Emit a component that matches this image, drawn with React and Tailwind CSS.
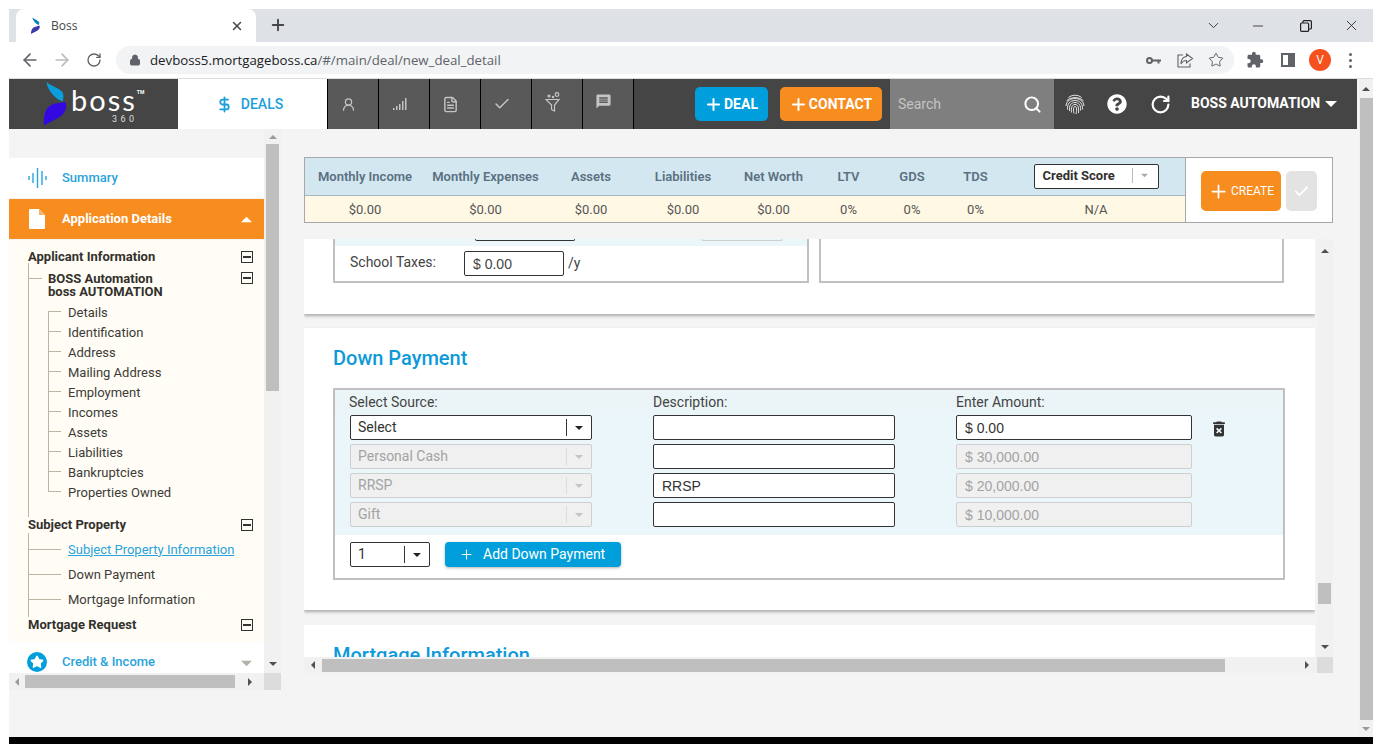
import { ArrowLeft, ArrowRight, RotateCw, Lock, Star, Check, Plus, Search, X, ChevronDown, Minus, UserRound, FileText, DollarSign } from 'lucide-react';
import { FaQuestionCircle } from 'react-icons/fa';
import { MdMessage, MdDeleteForever, MdExtension } from 'react-icons/md';

const roboto = { fontFamily: 'Roboto, sans-serif' };
const arial = { fontFamily: '"Liberation Sans", Arial, sans-serif' };

function Tri({ dir = 'down', className = '', size = 8 }) {
  const pts = {
    up: '0,6 4,2 8,6',
    down: '0,2 8,2 4,6',
    left: '6,0 6,8 2,4',
    right: '2,0 2,8 6,4',
  };
  return (
    <svg width={size} height={size} viewBox="0 0 8 8" className={className}>
      <polygon points={pts[dir]} fill="currentColor" />
    </svg>
  );
}

function Logo() {
  return (
    <svg width="26" height="46" viewBox="0 0 26 46" className="shrink-0">
      <path d="M3.5 0.5 C5 4 15 6 19.5 11 C21 14 20.5 18 19.5 20.5 C14 19 4 10 3.5 0.5 Z" fill="#0a9fdc" />
      <path d="M22 21 C24 24 23.5 29 20 33 C15 38 6 41 1 44.5 C0.5 37 1 30 6 25.5 C10 22 17 22 22 21 Z" fill="#3408e0" />
    </svg>
  );
}

function FingerprintRound() {
  return (
    <svg width="20" height="21" viewBox="0 0 20 21" fill="none" stroke="#e8e8e8" strokeWidth="1" className="shrink-0">
      <path d="M3.500 3.500C7 .5 13 .5 16.500 3.500" />
      <path d="M1.500 7C5 2.500 15 2.500 18.500 7" />
      <path d="M1 12C1.500 6.500 6 4.500 10 4.500s8.500 2 9 7.500" />
      <path d="M2.500 15.500C2 10 5 6.500 10 6.500s8 3.500 7.500 9" />
      <path d="M4.500 17C4 11.500 6 8.500 10 8.500s6 3 5.500 8" />
      <path d="M6.500 18.500C6 13.500 7 10.500 10 10.500s4 3 3.500 8.500" />
      <path d="M9 19.500c-.5-3-1-7 1-7s2 4 1 7.500" />
    </svg>
  );
}

function TabIcon({ children }) {
  return (
    <div className="flex h-full w-[51px] items-center justify-center border-r border-black bg-[#595959] pr-[9px] text-[#c4c4c4]">
      {children}
    </div>
  );
}

function HScroll({ className = '', thumb, left, right, arrow = 'text-[#505050]' }) {
  return (
    <div className={`flex h-full items-center bg-[#f1f1f1] text-[#505050] ${className}`}>
      <div className={`flex items-center justify-center ${left} ${arrow}`}><Tri dir="left" /></div>
      <div className={`h-[13px] bg-[#bfbfbf] ${thumb}`} />
      <div className="flex-1" />
      <div className={`flex items-center justify-center ${right}`}><Tri dir="right" /></div>
    </div>
  );
}

function MinusBox() {
  return (
    <div className="mr-[11px] flex h-[12px] w-[12px] shrink-0 items-center justify-center border border-[#333]">
      <div className="h-[2px] w-[8px] bg-[#333]" />
    </div>
  );
}

function SectionRow({ label, className = '' }) {
  return (
    <div className={`ml-[19px] flex items-center justify-between text-[13px] font-bold text-[#33312d] ${className}`}>
      <span className="whitespace-nowrap">{label}</span>
      <MinusBox />
    </div>
  );
}

function TreeLeaf({ label, first, last }) {
  return (
    <div className="flex h-[20px] text-[13px] text-[#3d3b38]">
      <div className="flex h-full w-[13px] shrink-0 flex-col">
        <div className={`h-[10px] border-b border-[#bbb5a5] ${first ? 'ml-0 border-l-0' : 'border-l'}`} />
        <div className={`h-[10px] ${last ? '' : 'border-l border-[#bbb5a5]'}`} />
      </div>
      <span className="ml-[7px] whitespace-nowrap leading-[22px]">{label}</span>
    </div>
  );
}

function PropertyLeaf({ label, link }) {
  return (
    <div className="flex h-[25px] items-center text-[13px] text-[#3d3b38]">
      <div className="h-px w-[32px] shrink-0 bg-[#bbb5a5]" />
      <span className={`ml-[7px] whitespace-nowrap ${link ? 'text-[#29a3dc] underline' : ''}`}>{label}</span>
    </div>
  );
}

function Sidebar() {
  const leaves = ['Details', 'Identification', 'Address', 'Mailing Address', 'Employment', 'Incomes', 'Assets', 'Liabilities', 'Bankruptcies', 'Properties Owned'];
  return (
    <div className="flex w-[272px] shrink-0 flex-col">
      <div className="flex h-[544px]">
        <div className="h-full w-[255px] overflow-hidden pt-[29px]">
          <div className="flex h-[40px] items-center bg-white pl-[19px] text-[13px] font-medium text-[#29a3dc]">
            <svg width="20" height="20" viewBox="0 0 20 20" className="shrink-0" stroke="#29a3dc" strokeWidth="1.4">
              <path d="M1 8v4M5 5v10M9.500 0v20M14 3v14M18 8v4" />
            </svg>
            <span className="ml-[14px]">Summary</span>
          </div>
          <div className="mt-px flex h-[40px] items-center justify-between bg-[#f78c1f] pl-[20px] pr-[12px] text-[13px] font-bold text-white">
            <div className="flex items-center">
              <svg width="16" height="20" viewBox="0 0 16 20" className="shrink-0">
                <path d="M1 0h9l6 6v13a1 1 0 0 1-1 1H1a1 1 0 0 1-1-1V1a1 1 0 0 1 1-1z" fill="#fff" />
                <path d="M10 0v6h6z" fill="#f9b26a" />
              </svg>
              <span className="ml-[17px]">Application Details</span>
            </div>
            <Tri dir="up" size={11} />
          </div>
          <div className="mt-px h-[402px] bg-[#fffdf5] pt-[10px]">
            <SectionRow label="Applicant Information" className="h-[13px]" />
            <div className="ml-[19px] border-l border-[#bbb5a5] pb-[15px] pt-[9px]">
              <div className="flex">
                <div className="mt-[6px] h-px w-[13px] shrink-0 bg-[#bbb5a5]" />
                <div className="ml-[6px] text-[13px] font-bold leading-[13px] text-[#33312d]">
                  BOSS Automation<br />boss AUTOMATION
                </div>
                <div className="flex-1" />
                <MinusBox />
              </div>
              <div className="ml-[19px] mt-[4px]">
                {leaves.map((l, i) => (
                  <TreeLeaf key={l} label={l} first={i === 0} last={i === leaves.length - 1} />
                ))}
              </div>
            </div>
            <SectionRow label="Subject Property" className="h-[16px]" />
            <div className="ml-[19px] border-l border-[#bbb5a5] pb-[5px] pt-[4px]">
              <PropertyLeaf label="Subject Property Information" link />
              <PropertyLeaf label="Down Payment" />
              <PropertyLeaf label="Mortgage Information" />
            </div>
            <SectionRow label="Mortgage Request" className="h-[16px]" />
          </div>
          <div className="flex h-[31px] items-center justify-between bg-white pl-[18px] pr-[12px] pt-[8px] text-[13px] font-medium text-[#29a3dc]">
            <div className="flex items-center">
              <div className="flex h-[20px] w-[20px] items-center justify-center rounded-full bg-[#009fdb]">
                <Star size={14} fill="#fff" stroke="#fff" />
              </div>
              <span className="ml-[15px]">Credit &amp; Income</span>
            </div>
            <Tri dir="down" size={11} className="mt-[3px] text-[#b3b0a8]" />
          </div>
        </div>
        <div className="flex h-full w-[17px] flex-col items-center bg-[#f1f1f1] text-[#9a9a9a]">
          <div className="flex h-[15px] items-center"><Tri dir="up" /></div>
          <div className="h-[247px] w-[13px] bg-[#bfbfbf]" />
          <div className="flex-1" />
          <div className="flex h-[18px] items-center text-[#505050]"><Tri dir="down" /></div>
        </div>
      </div>
      <div className="flex h-[17px]">
        <HScroll className="w-[255px]" thumb="w-[210px]" left="w-[16px]" right="w-[29px]" arrow="text-[#9a9a9a]" />
        <div className="w-[17px] bg-[#dcdcdc]" />
      </div>
    </div>
  );
}

function SummaryBar() {
  const cols = [
    ['Monthly Income', '$0.00'],
    ['Monthly Expenses', '$0.00'],
    ['Assets', '$0.00'],
    ['Liabilities', '$0.00'],
    ['Net Worth', '$0.00'],
    ['LTV', '0%'],
    ['GDS', '0%'],
    ['TDS', '0%'],
  ];
  return (
    <div className="flex h-[66px] w-[1029px] border border-[#a8a8a8] bg-white">
      <div className="flex w-[881px] flex-col border-r border-[#a8a8a8]">
        <div className="grid h-[38px] grid-cols-[120px_121px_90px_94px_87px_63px_64px_63px_178px] items-center border-b border-[#a8b8c0] bg-[#d2e7f0] text-center text-[13px] font-semibold text-[#5b7082]">
          {cols.map(([h]) => <div key={h}>{h}</div>)}
          <div className="flex justify-center">
            <div className="flex h-[25px] w-[125px] items-center rounded-[2px] border border-[#333] bg-white pb-[2px] pl-[8px] pr-[10px] text-[#33312d]">
              <span className="flex-1 whitespace-nowrap text-left text-[13px] font-bold">Credit Score</span>
              <div className="h-[15px] w-px bg-[#bbb]" />
              <Tri dir="down" size={7} className="ml-[8px] text-[#aaa]" />
            </div>
          </div>
        </div>
        <div className="grid flex-1 grid-cols-[120px_121px_90px_94px_87px_63px_64px_63px_178px] items-center bg-[#fff8e5] pt-px text-center text-[13px] text-[#555]">
          {cols.map(([h, v]) => <div key={h}>{v}</div>)}
          <div>N/A</div>
        </div>
      </div>
      <div className="flex flex-1 items-center pl-[15px] pt-[2px]">
        <div className="flex h-[40px] w-[80px] items-center justify-center gap-[2px] rounded-[5px] bg-[#f78c1f] text-[12px] text-white">
          <Plus size={21} strokeWidth={2} />
          <span>CREATE</span>
        </div>
        <div className="ml-[5px] flex h-[40px] w-[31px] items-center justify-center rounded-[5px] bg-[#e3e3e3] text-white">
          <Check size={17} strokeWidth={2.5} />
        </div>
      </div>
    </div>
  );
}

function Field({ w, value, disabled }) {
  return (
    <div
      className={`flex h-[25px] ${w} items-center rounded-[2px] border pl-[8px] pt-[2px] text-[14px] ${disabled ? 'border-[#cfcfcf] bg-[#f0f0f0] text-[#a3a3a3]' : 'border-[#333] bg-white text-[#333]'}`}
      style={arial}
    >
      {value}
    </div>
  );
}

function Select({ w, value, disabled }) {
  return (
    <div className={`flex h-[25px] ${w} items-center rounded-[2px] border pl-[7px] text-[14px] ${disabled ? 'border-[#cfcfcf] bg-[#f0f0f0] text-[#a3a3a3]' : 'border-[#333] bg-white text-[#333]'}`}>
      <span className="flex-1">{value}</span>
      <div className={`h-[17px] w-px ${disabled ? 'bg-[#dcdcdc]' : 'bg-[#333]'}`} />
      <div className="flex w-[24px] justify-center">
        <Tri dir="down" size={8} className={disabled ? 'text-[#c4c4c4]' : 'text-[#222]'} />
      </div>
    </div>
  );
}

function DownPaymentCard() {
  const rows = [
    ['Personal Cash', '', '$ 30,000.00'],
    ['RRSP', 'RRSP', '$ 20,000.00'],
    ['Gift', '', '$ 10,000.00'],
  ];
  return (
    <div className="mt-[14px] h-[282px] bg-white pl-[29px] pr-[30px] shadow-[0_2px_3px_rgba(0,0,0,0.3)]">
      <h2 className="pt-[18px] text-[20px] font-medium leading-[25px] text-[#0e9ad8]">Down Payment</h2>
      <div className="mt-[17px] h-[192px] border-2 border-[#c0c0c0]">
        <div className="grid h-[23px] grid-cols-[304px_303px_1fr] items-center bg-[#ebf5f7] pl-[14px] pt-[1px] text-[14px] text-[#444]">
          <span>Select Source:</span>
          <span>Description:</span>
          <span>Enter Amount:</span>
        </div>
        <div className="flex h-[122px] flex-col gap-[4px] bg-[#ebf6fb] pl-[15px] pt-[2px]">
          <div className="flex items-center">
            <Select w="w-[242px]" value="Select" />
            <div className="ml-[61px]"><Field w="w-[242px]" value="" /></div>
            <div className="ml-[61px]"><Field w="w-[236px]" value="$ 0.00" /></div>
            <MdDeleteForever size={20} className="ml-[17px] mt-[3px] text-[#333]" />
          </div>
          {rows.map(([src, desc, amt]) => (
            <div key={src} className="flex items-center">
              <Select w="w-[242px]" value={src} disabled />
              <div className="ml-[61px]"><Field w="w-[242px]" value={desc} /></div>
              <div className="ml-[61px]"><Field w="w-[236px]" value={amt} disabled /></div>
            </div>
          ))}
        </div>
        <div className="flex items-center pl-[15px] pt-[7px]">
          <Select w="w-[80px]" value="1" />
          <div className="ml-[15px] flex h-[25px] w-[176px] items-center rounded-[4px] bg-[#009fdb] pl-[14px] text-[14px] text-white shadow-[0_1px_3px_rgba(0,0,0,0.3)]">
            <Plus size={15} strokeWidth={1.75} />
            <span className="ml-[9px]">Add Down Payment</span>
          </div>
        </div>
      </div>
    </div>
  );
}

function ScrolledPane() {
  return (
    <div className="mt-[16px] flex h-[434px] w-[1029px] flex-col">
      <div className="flex h-[418px]">
        <div className="w-[1011px] overflow-hidden">
          <div className="h-[75px] bg-white pl-[29px] pr-[30px] shadow-[0_2px_3px_rgba(0,0,0,0.3)]">
            <div className="flex h-[44px] gap-[10px]">
              <div className="w-[476px] border-x-2 border-b-2 border-[#c0c0c0]">
                <div className="h-[7px] bg-[#ebf6fb]">
                  <div className="flex h-[2px]">
                    <div className="ml-[140px] h-[2px] w-[100px] rounded-b-[2px] border-x border-b border-[#333]" />
                    <div className="ml-[127px] h-[2px] w-[80px] border-x border-b border-[#cfcfcf]" />
                  </div>
                </div>
                <div className="mt-[5px] flex items-center text-[14px] text-[#444]">
                  <span className="mb-[2px] ml-[15px] w-[114px]">School Taxes:</span>
                  <div className="flex h-[25px] w-[100px] items-center rounded-[2px] border border-[#333] pl-[8px] pt-[1px]" style={arial}>$ 0.00</div>
                  <span className="ml-[4px]">/y</span>
                </div>
              </div>
              <div className="w-[465px] border-x-2 border-b-2 border-[#c0c0c0]" />
            </div>
          </div>
          <DownPaymentCard />
          <div className="mt-[15px] h-[60px] bg-white pl-[29px] pt-[18px]">
            <h2 className="text-[20px] font-medium leading-[25px] text-[#0e9ad8]">Mortgage Information</h2>
          </div>
        </div>
        <div className="ml-[2px] flex h-full w-[16px] flex-col items-center bg-[#f1f1f1] pr-[1px] text-[#505050]">
          <div className="flex h-[16px] items-end"><Tri dir="up" /></div>
          <div className="flex-1" />
          <div className="h-[21px] w-[13px] bg-[#bfbfbf]" />
          <div className="h-[39px]" />
          <div className="flex h-[14px] items-start"><Tri dir="down" /></div>
        </div>
      </div>
      <div className="flex h-[16px]">
        <HScroll className="w-[1013px]" thumb="w-[903px]" left="w-[18px]" right="w-[20px]" />
        <div className="w-[16px] bg-[#dcdcdc]" />
      </div>
    </div>
  );
}

function AppHeader() {
  return (
    <div className="flex h-[50px] w-[1348px] items-stretch bg-[#454545] text-white">
      <div className="flex w-[169px] items-center pl-[34px]">
        <Logo />
        <div className="ml-[2px] flex flex-col items-start leading-none">
          <div className="flex h-[25px] items-start">
            <span className="text-[29px] leading-[30px] tracking-[2px]" style={{ fontFamily: 'Lato, sans-serif' }}>boss</span>
            <span className="mt-[5px] text-[5px] font-bold">TM</span>
          </div>
          <span className="ml-[41px] mt-[5px] text-[9px] tracking-[3.5px] text-[#ddd]">360</span>
        </div>
      </div>
      <div className="flex w-[149px] items-center justify-center bg-white pr-[6px] font-medium text-[#1a9fdc]">
        <DollarSign size={17} strokeWidth={2.5} className="mr-[8px]" />
        <span className="text-[14px]">DEALS</span>
      </div>
      <div className="flex h-full border-l border-black">
        <TabIcon><UserRound size={15} strokeWidth={2} /></TabIcon>
        <TabIcon>
          <svg width="14" height="13" viewBox="0 0 14 13" fill="#c4c4c4">
            <rect x="0" y="10" width="1.500" height="2" /><rect x="3" y="8" width="1.500" height="4" /><rect x="6" y="6" width="1.500" height="6" /><rect x="9" y="3" width="1.500" height="9" /><rect x="12" y="0" width="1.500" height="12" />
          </svg>
        </TabIcon>
        <TabIcon><FileText size={17} strokeWidth={2} /></TabIcon>
        <TabIcon><Check size={18} strokeWidth={2} /></TabIcon>
        <TabIcon>
          <svg width="16" height="20" viewBox="0 0 16 20" fill="none" stroke="#c4c4c4" strokeWidth="1.200" className="mb-[4px]">
            <path d="M1 7.500h13l-4.500 5.500v6l-3-1.500v-4.500z" />
            <circle cx="12" cy="2.500" r="1.800" />
            <circle cx="4" cy="4" r="1" fill="#c4c4c4" />
            <circle cx="8" cy="5" r="0.600" fill="#c4c4c4" />
          </svg>
        </TabIcon>
        <TabIcon><MdMessage size={17} className="mb-[5px]" /></TabIcon>
      </div>
      <div className="ml-[61px] flex items-center">
        <div className="flex h-[34px] w-[73px] items-center justify-center gap-[1px] rounded-[5px] bg-[#009fdb] pr-[1px] text-[14px] font-bold">
          <Plus size={19} strokeWidth={2.5} />
          <span>DEAL</span>
        </div>
        <div className="ml-[12px] flex h-[34px] w-[102px] items-center justify-center gap-[1px] rounded-[5px] bg-[#f78c1f] pr-[1px] text-[14px] font-bold">
          <Plus size={19} strokeWidth={2.5} />
          <span>CONTACT</span>
        </div>
      </div>
      <div className="ml-[8px] flex w-[164px] items-center justify-between bg-[#7f7f7f] pl-[8px] pr-[12px] text-[14px] text-[#c4c4c4]">
        <span>Search</span>
        <Search size={19} strokeWidth={2.5} className="text-white" />
      </div>
      <div className="flex flex-1 items-center pl-[11px]">
        <FingerprintRound />
        <FaQuestionCircle size={20} className="ml-[22px]" />
        <RotateCw size={21} strokeWidth={2.500} className="ml-[23px]" />
        <span className="mb-[2px] ml-[20px] whitespace-nowrap text-[14px] font-bold">BOSS AUTOMATION</span>
        <Tri dir="down" size={12} className="ml-[5px]" />
      </div>
    </div>
  );
}

function BrowserChrome() {
  return (
    <div style={{ fontFamily: '"Open Sans", sans-serif' }}>
      <div className="flex h-[33px] items-end bg-[#dee1e6]">
        <div className="ml-[7px] flex h-[33px] w-[240px] items-center rounded-t-[8px] bg-white pl-[15px] pr-[12px]">
          <svg width="10" height="17" viewBox="0 0 10 17" className="shrink-0">
            <path d="M1 0c1 2 5 2.500 7 5 .4 1 .2 2-.2 3C5 7 2 4 1 0z" fill="#0a7fc4" />
            <path d="M8.500 8.500c.6 1.500.2 3-1 4.200C5.500 14.500 2 15.500 0 17c0-3 .5-5 2.500-6.500 1.500-1 4-1.200 6-2z" fill="#3a3aa8" />
          </svg>
          <span className="ml-[10px] flex-1 text-[12px] text-[#45474a]">Boss</span>
          <X size={14} strokeWidth={2.500} className="text-[#45474a]" />
        </div>
        <Plus size={18} strokeWidth={2.500} className="mb-[8px] ml-[13px] text-[#45474a]" />
        <div className="flex-1" />
        <div className="flex h-[33px] items-center text-[#222]">
          <ChevronDown size={17} strokeWidth={1.200} />
          <Minus size={16} strokeWidth={1.200} className="ml-[28px]" />
          <svg width="12" height="12" viewBox="0 0 12 12" fill="none" stroke="#222" strokeWidth="1.200" className="ml-[34px]">
            <rect x="0.600" y="3" width="8" height="8.400" rx="1" />
            <path d="M3 3V1.600a1 1 0 0 1 1-1h6.400a1 1 0 0 1 1 1V8a1 1 0 0 1-1 1H8.600" />
          </svg>
          <X size={17} strokeWidth={1.200} className="ml-[31px] mr-[13px]" />
        </div>
      </div>
      <div className="flex h-[37px] border-b border-[#dcdcdc] pt-[4px]">
        <div className="flex h-[28px] items-center text-[#5f6368]">
          <ArrowLeft size={20} strokeWidth={2} className="ml-[11px]" />
          <ArrowRight size={20} strokeWidth={2} className="ml-[12px] text-[#babcbe]" />
          <RotateCw size={16} strokeWidth={2} className="ml-[14px]" />
        </div>
        <div className="ml-[14px] flex h-[28px] w-[1118px] items-center rounded-full bg-[#f1f3f4] pl-[13px] pr-[10px]">
          <Lock size={12} fill="#5f6368" strokeWidth={2} className="text-[#5f6368]" />
          <span className="ml-[9px] flex-1 pt-[2px] text-[13.25px] text-[#202124]">
            devboss5.mortgageboss.ca<span className="text-[#5f6368]">/#/main/deal/new_deal_detail</span>
          </span>
          <svg width="15" height="9" viewBox="0 0 15 9" fill="none" className="text-[#5f6368]">
            <circle cx="3.500" cy="4.500" r="2.500" stroke="#5f6368" strokeWidth="2" />
            <path d="M6 3.500h9v2h-1.500v2h-2v-2H6z" fill="#5f6368" />
          </svg>
          <svg width="17" height="15" viewBox="0 0 17 15" fill="none" stroke="#5f6368" strokeWidth="1.100" className="ml-[16px]">
            <path d="M6 2H1v12h12v-3.500" />
            <path d="M9.500 1l6 4.500-6 4.500V7.500C7 7.500 5 9 4 11c0-4 2-7 5.500-7.500z" />
          </svg>
          <Star size={16} strokeWidth={1.500} className="ml-[14px] text-[#5f6368]" />
        </div>
        <div className="flex h-[28px] flex-1 items-center text-[#5f6368]">
          <MdExtension size={18} className="ml-[12px]" />
          <div className="ml-[17px] flex h-[14px] w-[14px] justify-end border-2 border-[#5f6368]">
            <div className="h-full w-[5px] bg-[#5f6368]" />
          </div>
          <div className="ml-[14px] flex h-[22px] w-[22px] items-center justify-center rounded-full bg-[#f4511e] text-[12px] text-white">V</div>
          <div className="ml-[18px] flex flex-col gap-[3px]">
            <div className="h-[3px] w-[3px] rounded-full bg-[#5f6368]" />
            <div className="h-[3px] w-[3px] rounded-full bg-[#5f6368]" />
            <div className="h-[3px] w-[3px] rounded-full bg-[#5f6368]" />
          </div>
        </div>
      </div>
    </div>
  );
}

export default function App() {
  return (
    <div className="h-[744px] w-[1382px] overflow-hidden bg-white pl-[9px] pr-[9px] pt-[9px]" style={roboto}>
      <BrowserChrome />
      <div className="flex h-[658px]">
        <div className="flex w-[1350px] flex-col bg-[#f4f4f4]">
          <AppHeader />
          <div className="flex flex-1">
            <Sidebar />
            <div className="ml-[23px] pt-[28px]">
              <SummaryBar />
              <ScrolledPane />
            </div>
          </div>
        </div>
        <div className="flex w-[14px] flex-col items-center bg-[#f1f1f1] text-[#505050]">
          <div className="flex h-[19px] items-center"><Tri dir="up" /></div>
          <div className="h-[622px] w-[13px] bg-[#bfbfbf]" />
          <div className="flex flex-1 items-center text-[#9a9a9a]"><Tri dir="down" /></div>
        </div>
      </div>
      <div className="h-[7px] bg-black" />
    </div>
  );
}
